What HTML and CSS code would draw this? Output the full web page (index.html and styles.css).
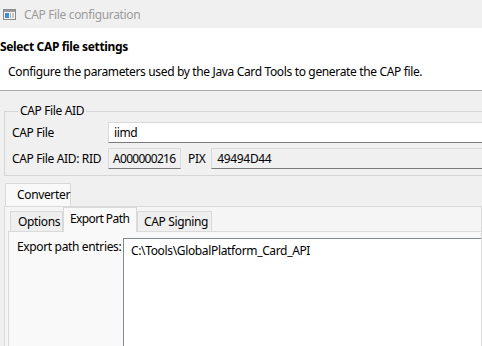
FILE: index.html
```
<!DOCTYPE html>
<html lang="en">

<head>
    <meta charset="UTF-8">
    <title>CAP File configuration</title>
    <link rel="stylesheet" href="styles.css">
</head>

<body>
    <!-- window title -->
    <div class="titlebar">
        <svg class="app-icon" width="13" height="11" viewBox="0 0 13 11">
            <rect x="0.5" y="0.5" width="12" height="10" fill="#f4f4f4" stroke="#8a8a8a" />
            <rect x="1" y="1" width="11" height="2" fill="#9a9a9a" />
            <rect x="2" y="4" width="4" height="5" fill="#3a8fd6" />
            <rect x="7" y="4" width="1" height="5" fill="#b0b0b0" />
            <rect x="9" y="4" width="2" height="5" fill="#c8c8c8" />
        </svg>
        <span class="title">CAP File configuration</span>
    </div>

    <!-- page header -->
    <div class="header">
        <h1>Select CAP file settings</h1>
        <p>Configure the parameters used by the Java Card Tools to generate the CAP file.</p>
    </div>

    <div class="content">
        <!-- AID group -->
        <fieldset class="group">
            <legend>CAP File AID</legend>
            <div class="row">
                <label class="row-label">CAP File</label>
                <div class="field field-edit">iimd</div>
            </div>
            <div class="row">
                <label class="row-label">CAP File AID: RID</label>
                <div class="field field-ro rid">A000000216</div>
                <label class="pix-label">PIX</label>
                <div class="field field-ro pix">49494D44</div>
            </div>
        </fieldset>

        <!-- converter tabs -->
        <div class="outer-tabs">
            <div class="tab tab-outer">Converter</div>
        </div>
        <div class="outer-pane">
            <div class="inner-tabs">
                <div class="tab tab-inner tab-options">Options</div>
                <div class="tab tab-inner tab-export current">Export Path</div>
                <div class="tab tab-inner tab-signing">CAP Signing</div>
            </div>
            <div class="inner-pane">
                <label class="entries-label">Export path entries:</label>
                <div class="entries">
                    <div>C:\Tools\GlobalPlatform_Card_API</div>
                </div>
            </div>
        </div>
    </div>
</body>

</html>
```
FILE: styles.css
```
* {
    padding: 0;
    margin: 0;
    box-sizing: border-box;
}

body {
    width: 482px;
    height: 346px;
    overflow: hidden;
    background-color: #f0f0f0;
    font-family: "Noto Sans", sans-serif;
    font-size: 12px;
    letter-spacing: -0.35px;
    color: #000;
}

.titlebar {
    display: flex;
    align-items: center;
    height: 28px;
    padding-left: 3px;
    background-color: #f0f0f0;
}

.app-icon {
    margin-right: 8px;
}

.title {
    color: #9b9b9b;
}

.header {
    height: 63px;
    background-color: #fff;
    border-bottom: 1px solid #a9a9a9;
    padding-top: 11px;
}

.header h1 {
    font-size: 12px;
    font-weight: bold;
    line-height: 16px;
}

.header p {
    margin-top: 9px;
    padding-left: 8px;
    line-height: 16px;
}

.content {
    padding-left: 4px;
}

.group {
    margin-top: 12px;
    margin-right: -10px;
    border: 1px solid #d5d5d5;
    padding: 3px 0 6px 7px;
}

.group legend {
    margin-left: 6px;
    padding: 0 2px 0 2px;
    line-height: 16px;
}

.row {
    display: flex;
    align-items: center;
    height: 21px;
}

.row + .row {
    margin-top: 5px;
}

.row-label {
    width: 96px;
}

.field {
    height: 21px;
    line-height: 19px;
    padding-left: 5px;
    border: 1px solid #d9d9d9;
    border-bottom-color: #7a7a7a;
}

.field-edit {
    flex: 1;
    background-color: #fff;
}

.field-ro {
    background-color: #f0f0f0;
}

.rid {
    width: 73px;
    padding-left: 4px;
    letter-spacing: -0.7px;
}

.pix-label {
    padding: 0 6px 0 7px;
}

.pix {
    flex: 1;
}

.outer-tabs {
    display: flex;
    margin-top: 7px;
    padding-left: 1px;
}

.tab {
    border: 1px solid #d9d9d9;
    border-bottom: none;
    line-height: 20px;
    white-space: nowrap;
}

.tab-outer {
    width: 66px;
    height: 23px;
    padding-left: 11px;
    padding-top: 1px;
    background-color: #f9f9f9;
}

.outer-pane {
    display: flex;
    flex-direction: column;
    height: 140px;
    border: 1px solid #dadada;
    border-bottom: none;
    background-color: #f5f5f5;
    padding-left: 3px;
}

.inner-tabs {
    display: flex;
    align-items: flex-end;
    height: 24px;
    padding-left: 2px;
}

.tab-inner {
    height: 20px;
    line-height: 19px;
    padding-left: 7px;
    background-color: #efefef;
}

.tab-options {
    width: 53px;
}

.tab-export {
    width: 74px;
}

.tab-signing {
    width: 75px;
    padding-left: 6px;
}

.tab-inner.current {
    height: 25px;
    line-height: 22px;
    padding-left: 6px;
    letter-spacing: -0.6px;
    background-color: #f9f9f9;
    margin-bottom: -1px;
    position: relative;
}

.inner-pane {
    flex: 1;
    display: flex;
    border-top: 1px solid #dadada;
    border-left: 1px solid #dadada;
    background-color: #f9f9f9;
    padding: 6px 0 0 8px;
}

.entries-label {
    width: 106px;
    line-height: 16px;
    padding-top: 1px;
    white-space: nowrap;
}

.entries {
    flex: 1;
    background-color: #fff;
    border-top: 1px solid #828790;
    border-left: 1px solid #828790;
    padding: 3px 0 0 7px;
    line-height: 17px;
}
```
